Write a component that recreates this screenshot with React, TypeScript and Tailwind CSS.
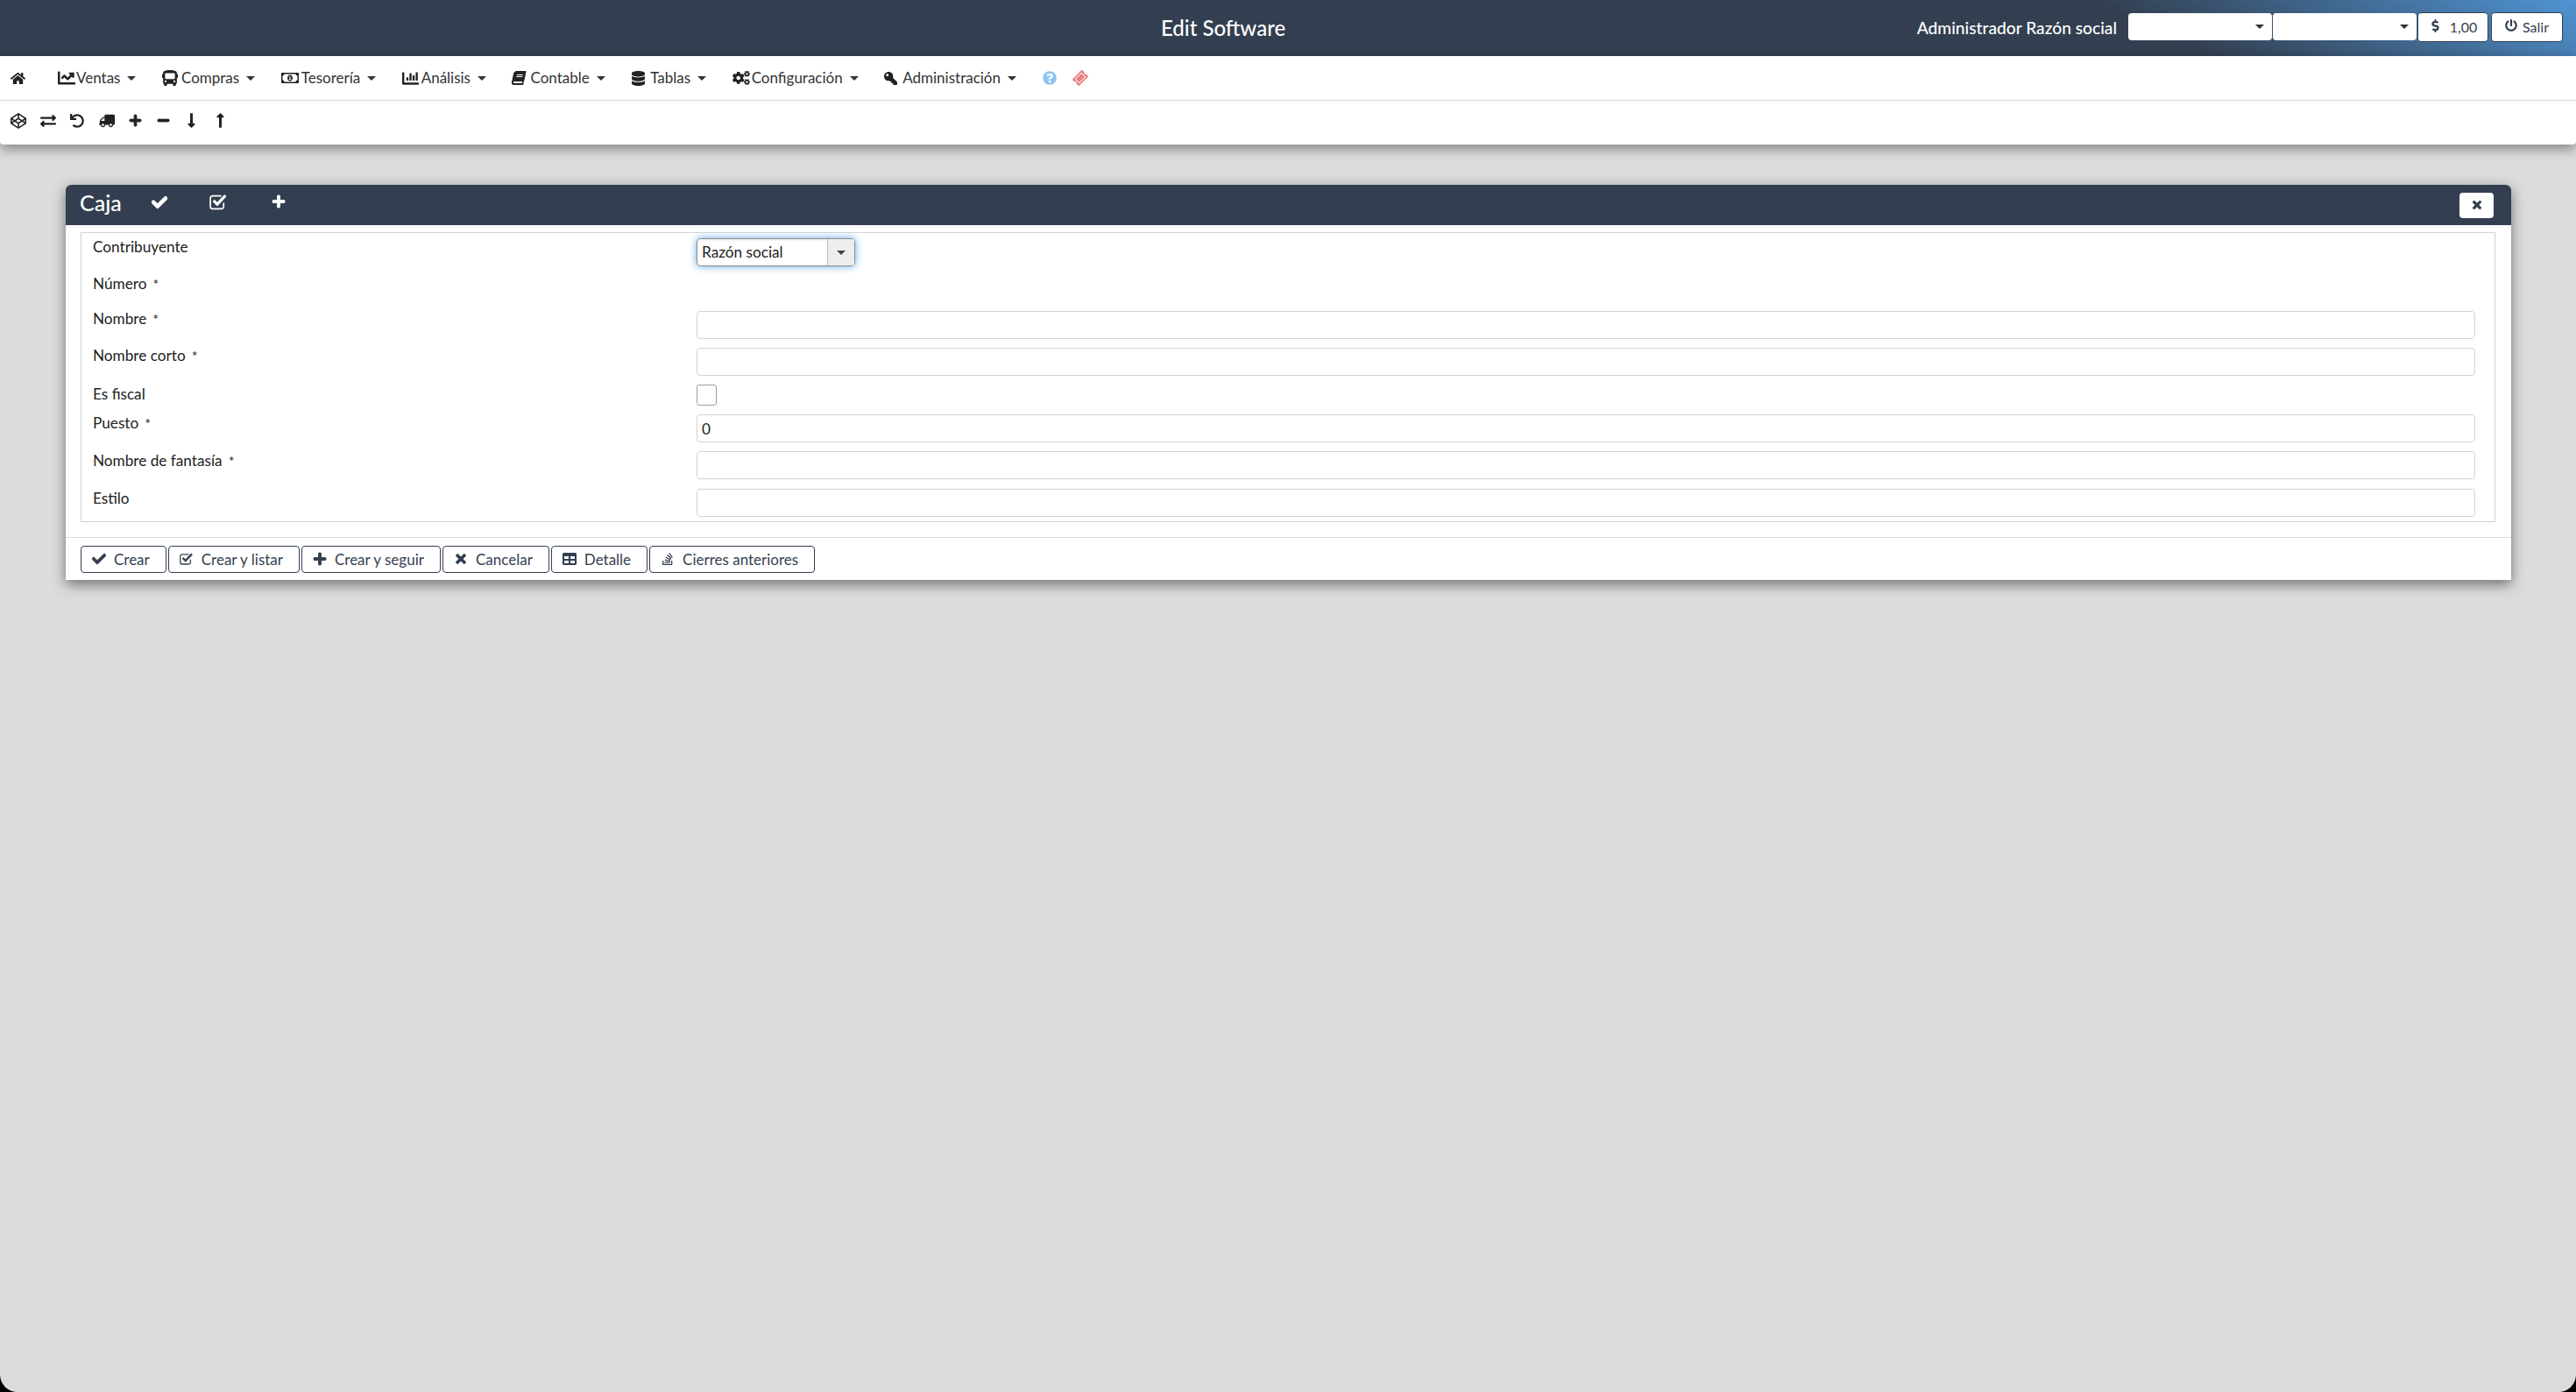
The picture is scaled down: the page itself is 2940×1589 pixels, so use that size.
import React from "react";
import {
  FaHome,
  FaChartLine,
  FaBus,
  FaRegMoneyBillAlt,
  FaChartBar,
  FaBook,
  FaDatabase,
  FaCogs,
  FaKey,
  FaQuestionCircle,
  FaTicketAlt,
  FaCodepen,
  FaExchangeAlt,
  FaUndo,
  FaTruck,
  FaPlus,
  FaMinus,
  FaLongArrowAltDown,
  FaLongArrowAltUp,
  FaCheck,
  FaTimes,
  FaTable,
  FaStackOverflow,
  FaPowerOff,
  FaDollarSign,
} from "react-icons/fa";

// check-square-o, the react-icons one has no check leaving the box
function CheckSquare({ className }: { className?: string }) {
  return (
    <svg viewBox="0 0 20 18" fill="none" stroke="currentColor" className={className}>
      <path d="M15.5 10v4a2.5 2.5 0 0 1-2.5 2.5H3.5A2.5 2.5 0 0 1 1 14V5a2.5 2.5 0 0 1 2.5-2.5H13" strokeWidth="1.6" />
      <path d="M4.5 7.5l4 4 9-9.5" strokeWidth="3" />
    </svg>
  );
}

const menu = [
  { label: "Ventas", icon: FaChartLine, cls: "text-[20px] w-[21px]" },
  { label: "Compras", icon: FaBus, cls: "text-[18px] w-[22px]" },
  { label: "Tesorería", icon: FaRegMoneyBillAlt, cls: "text-[20px] w-[23px]" },
  { label: "Análisis", icon: FaChartBar, cls: "text-[19px] w-[22px]" },
  { label: "Contable", icon: FaBook, cls: "text-[16px] w-[21px] [&>svg]:-skew-x-12" },
  { label: "Tablas", icon: FaDatabase, cls: "text-[17px] w-[22px]" },
  { label: "Configuración", icon: FaCogs, cls: "text-[20px] w-[22px]" },
  { label: "Administración", icon: FaKey, cls: "text-[15px] w-[21px] [&>svg]:-scale-x-100" },
];

const actions = [
  { label: "Crear", icon: FaCheck, cls: "text-[16px] stroke-[30]" },
  { label: "Crear y listar", icon: CheckSquare, cls: "w-[17px] h-[16px]" },
  { label: "Crear y seguir", icon: FaPlus, cls: "text-[16px] stroke-[30]" },
  { label: "Cancelar", icon: FaTimes, cls: "text-[16px] stroke-[30]" },
  { label: "Detalle", icon: FaTable, cls: "text-[16px]" },
  { label: "Cierres anteriores", icon: FaStackOverflow, cls: "text-[16px]" },
];

function Caret() {
  return <span className="ml-[8px] inline-block w-0 h-0 border-x-[5px] border-x-transparent border-t-[5px] border-t-[#333]" />;
}

function Required() {
  return <span className="ml-[7px] text-[16px]">*</span>;
}

function TextRow({ label, required, value, rowCls, labelCls }: any) {
  return (
    <div className={`flex ${rowCls}`}>
      <div className={`w-[702px] shrink-0 pl-[13px] leading-[20px] ${labelCls}`}>
        {label}
        {required && <Required />}
      </div>
      <input
        readOnly
        value={value || ""}
        className="h-[32px] mt-[1px] w-[2030px] rounded-[4px] border border-[#d4d4d4] bg-white px-[5px] text-[17.2px] text-[#222] outline-none"
      />
    </div>
  );
}

export default function App() {
  return (
    <div className="h-screen bg-black font-['Lato','Noto_Sans',sans-serif] text-[17.2px] text-[#222]">
      <div className="h-full rounded-b-[20px] bg-[#dcdcdc] overflow-hidden">
        {/* Top bar */}
        <header className="h-[64px] flex items-center pr-[15px] bg-[linear-gradient(25deg,#333f50_82%,#4f94d4_100%)] text-white">
          <div className="flex-1 pl-[1325px] text-[24px] font-medium">Edit Software</div>
          <div className="text-[19.2px] font-medium mr-[13px]">Administrador Razón social</div>
          <div className="flex items-center text-[#222]">
            <div className="w-[164px] h-[31px] mt-[-3px] bg-white rounded-[4px] flex items-center justify-end pr-[9px] mr-[1px]">
              <Caret />
            </div>
            <div className="w-[164px] h-[31px] mt-[-3px] bg-white rounded-[4px] flex items-center justify-end pr-[9px] mr-[1px]">
              <Caret />
            </div>
            <button className="w-[81px] h-[34px] mt-[-3px] mr-[3px] bg-white border border-[#333f50] rounded-[4px] flex items-center justify-center gap-[9px] text-[16px] text-[#333f50]">
              <FaDollarSign className="text-[15px] mt-[-3px]" />
              1,00
            </button>
            <button className="w-[82px] h-[34px] mt-[-3px] bg-white border border-[#333f50] rounded-[4px] flex items-center justify-center gap-[6px] text-[16px] text-[#333f50]">
              <FaPowerOff className="text-[14px] mt-[-3px]" />
              Salir
            </button>
          </div>
        </header>

        {/* Menu and toolbar */}
        <div className="bg-white rounded-b-[4px] shadow-[0_5px_14px_rgba(0,0,0,0.4)]">
          <nav className="h-[51px] flex items-center pl-[12px] border-b border-[#d6d6d6] text-[17px] text-[#333]">
            <FaHome className="text-[17px] mr-[37px] text-[#222]" />
            <div className="flex items-center gap-[29.5px]">
              {menu.map((m) => (
                <div key={m.label} className="flex items-center">
                  <span className={`flex items-center text-[#222] ${m.cls}`}>
                    <m.icon />
                  </span>
                  {m.label}
                  <Caret />
                </div>
              ))}
            </div>
            <FaQuestionCircle className="text-[16px] ml-[30px] text-[#8cc4f2]" />
            <FaTicketAlt className="text-[16px] ml-[19px] text-[#e57e7e] -rotate-45" />
          </nav>
          <div className="h-[50px] flex items-center pl-[4px] pb-[5px] text-[#222] [&>span]:flex [&>span]:justify-center">
            <span className="w-[34px]"><FaCodepen className="text-[18px]" /></span>
            <span className="w-[33px]"><FaExchangeAlt className="text-[18px]" /></span>
            <span className="w-[34px]"><FaUndo className="text-[16px]" /></span>
            <span className="w-[33px]"><FaTruck className="text-[18px] -scale-x-100" /></span>
            <span className="w-[32px]"><FaPlus className="text-[15px] stroke-[30]" /></span>
            <span className="w-[32px]"><FaMinus className="text-[15px] stroke-[30]" /></span>
            <span className="w-[32px]"><FaLongArrowAltDown className="text-[19px]" /></span>
            <span className="w-[34px]"><FaLongArrowAltUp className="text-[19px]" /></span>
          </div>
        </div>

        {/* Caja form */}
        <section className="mt-[46px] ml-[75px] mr-[74px] bg-white rounded-t-[6px] shadow-[0_5px_15px_rgba(0,0,0,0.5)]">
          <div className="h-[46px] bg-[#333f50] rounded-t-[6px] flex items-center pl-[16px] pr-[20px] text-white">
            <span className="text-[25px] font-medium w-[82px] mt-[-4px]">Caja</span>
            <FaCheck className="text-[18px] mt-[-6px] stroke-[30]" />
            <CheckSquare className="w-[21px] h-[19px] mt-[-8px] ml-[48px]" />
            <FaPlus className="text-[16px] mt-[-8px] ml-[50px] stroke-[30]" />
            <button className="ml-auto w-[39px] h-[29px] bg-white rounded-[4px] flex items-center justify-center text-[#333f50]">
              <FaTimes className="text-[14px] stroke-[30]" />
            </button>
          </div>

          <div className="pl-[17px] pr-[18px] pt-[8px]">
            <div className="h-[331px] border border-[#d4d4d4]">
              <div className="flex h-[48px]">
                <div className="w-[702px] shrink-0 pl-[13px] pt-[6px] leading-[20px]">Contribuyente</div>
                <div className="mt-[6px] w-[181px] h-[32px] flex rounded-[4px] border border-[#8f8f8f] shadow-[0_0_8px_rgba(80,160,230,0.95)]">
                  <div className="flex-1 flex items-center pl-[5px] rounded-l-[3px] shadow-[inset_0_2px_2px_rgba(0,0,0,0.06)]">Razón social</div>
                  <div className="w-[31px] bg-[#eeeeee] border-l border-[#bbb] rounded-r-[3px] flex items-center justify-center">
                    <span className="inline-block w-0 h-0 border-x-[5px] border-x-transparent border-t-[5px] border-t-[#444]" />
                  </div>
                </div>
              </div>
              <div className="flex h-[40px]">
                <div className="pl-[13px] leading-[20px]">
                  Número
                  <Required />
                </div>
              </div>
              <TextRow label="Nombre" required rowCls="h-[42px]" labelCls="" />
              <TextRow label="Nombre corto" required rowCls="h-[42px]" labelCls="" />
              <div className="flex h-[34px]">
                <div className="w-[702px] shrink-0 pl-[13px] pt-[2px] leading-[20px]">Es fiscal</div>
                <span className="mt-[1px] w-[23px] h-[24px] rounded-[3px] border border-[#9f9f9f] bg-white" />
              </div>
              <TextRow label="Puesto" required value="0" rowCls="h-[42px]" labelCls="pt-[1px]" />
              <TextRow label="Nombre de fantasía" required rowCls="h-[43px]" labelCls="pt-[2px]" />
              <TextRow label="Estilo" rowCls="h-[37px]" labelCls="pt-[2px]" />
            </div>
          </div>

          <div className="mt-[17px] h-[49px] border-t border-[#d9d9d9] pl-[17px] pr-[18px] pt-[9px] flex gap-[2px] text-[17px]">
            {actions.map((a) => (
              <button
                key={a.label}
                className="h-[31px] pl-[12px] pr-[18px] flex items-center gap-[9px] rounded-[4px] border border-[#333f50] bg-white text-[#333f50]"
              >
                <span className="w-[16px] flex justify-center">
                  <a.icon className={`mt-[-2px] ${a.cls}`} />
                </span>
                {a.label}
              </button>
            ))}
          </div>
        </section>
      </div>
    </div>
  );
}
